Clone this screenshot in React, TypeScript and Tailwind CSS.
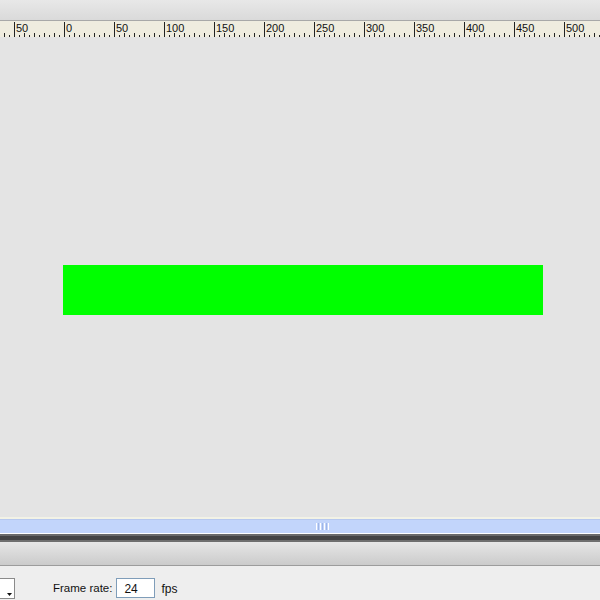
import React from 'react';

const font = { fontFamily: '"Liberation Sans", Arial, sans-serif' };

function Ruler() {
  const ticks: React.ReactElement[] = [];
  for (let x = -1; x < 600; x += 5) {
    const rel = x - 14;
    if (rel % 50 === 0) continue;
    const tall = rel % 10 === 0;
    ticks.push(<rect key={x} x={x} y={tall ? 12 : 14} width={1} height={tall ? 4 : 2} fill="#222" />);
  }
  const labels = ['50', '0', '50', '100', '150', '200', '250', '300', '350', '400', '450', '500'];
  return (
    <svg width="600" height="16" className="block">
      {ticks}
      {labels.map((l, i) => {
        const x = 14 + i * 50;
        return (
          <g key={i}>
            <rect x={x} y={1} width={1} height={15} fill="#222" />
            <text x={x + 2} y={10.5} fontSize="11" fill="#111" style={font}>
              {l}
            </text>
          </g>
        );
      })}
    </svg>
  );
}

export default function App() {
  return (
    <div className="w-[600px] h-[600px] flex flex-col overflow-hidden bg-[#e4e4e4]" style={font}>
      <div className="h-[21px] bg-gradient-to-b from-[#e8e8e8] to-[#dadada] border-b border-[#a8a8a8]" />
      <div className="h-[16px] bg-[#efecdf]">
        <Ruler />
      </div>
      <div className="flex-1 bg-[#e4e4e4] pt-[228px]">
        <div className="ml-[63px] w-[480px] h-[50px] bg-[#00ff00]" />
      </div>
      <div className="h-[2px] bg-[#f2f2e6]" />
      <div className="h-[14px] bg-[#c2d5fb] border-t border-[#b6c8ef] flex items-center justify-center">
        <div className="flex gap-[1px] ml-[45px]">
          <div className="w-[1px] h-[7px] bg-white" />
          <div className="w-[1px] h-[7px] bg-[#9fb6e6]" />
          <div className="w-[1px] h-[7px] bg-white" />
          <div className="w-[1px] h-[7px] bg-[#9fb6e6]" />
          <div className="w-[1px] h-[7px] bg-white" />
          <div className="w-[1px] h-[7px] bg-[#9fb6e6]" />
          <div className="w-[1px] h-[7px] bg-white" />
        </div>
      </div>
      <div className="h-[1px] bg-white" />
      <div className="h-[2px] bg-[#6a6a6a]" />
      <div className="h-[4px] bg-[#444444]" />
      <div className="h-[2px] bg-[#6e6e6e]" />
      <div className="h-[24px] bg-gradient-to-b from-[#e6e6e6] to-[#cbcbcb] border-b border-[#9c9c9c]" />
      <div className="flex-none h-[34px] bg-[#eeeeee] flex items-center text-[11px] text-[#111]">
        <div className="ml-[-1px] mt-[10px] w-[16px] h-[21px] bg-white border border-[#8a8a8a] flex items-end justify-end pr-[2px] pb-[2px]">
          <svg width="5" height="3" viewBox="0 0 5 3">
            <path d="M0 0h5L2.5 3z" fill="#111" />
          </svg>
        </div>
        <span className="ml-[38px] mt-[11px] text-[11.5px]">Frame rate:</span>
        <div className="ml-[4px] mt-[10px] w-[39px] h-[20px] bg-white border border-[#7f9db9] flex items-center pl-[7px] pt-[1px] text-[12px]">
          24
        </div>
        <span className="ml-[6px] mt-[11px] text-[12px]">fps</span>
      </div>
    </div>
  );
}
